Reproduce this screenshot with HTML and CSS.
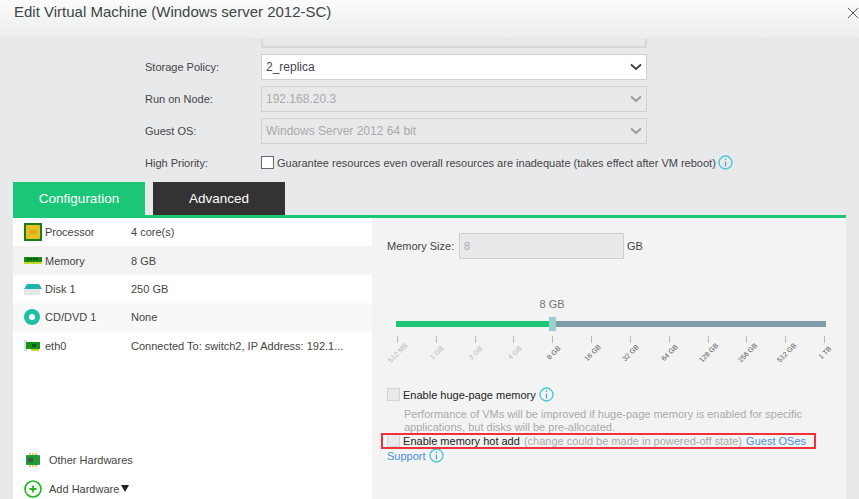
FILE: index.html
```html
<!DOCTYPE html>
<html lang="en">

<head>
  <meta charset="UTF-8">
  <meta name="viewport" content="width=device-width, initial-scale=1.0">
  <title>Edit Virtual Machine</title>
  <link rel="stylesheet" href="styles.css">
</head>

<body>
  <div class="header">
    <h1 class="title">Edit Virtual Machine (Windows server 2012-SC)</h1>
    <svg class="close" width="12" height="12" viewBox="0 0 12 12">
      <path d="M1 1l10 10M11 1L1 11" stroke="#555" stroke-width="1" fill="none" />
    </svg>
  </div>

  <div class="form">
    <div class="stub"></div>
    <div class="form-row">
      <label class="form-label">Storage Policy:</label>
      <div class="select">
        <span>2_replica</span>
        <svg class="chevron" width="12" height="8" viewBox="0 0 12 8">
          <path d="M1 1.5l5 4.5 5-4.5" stroke="#444" stroke-width="2" fill="none" />
        </svg>
      </div>
    </div>
    <div class="form-row">
      <label class="form-label">Run on Node:</label>
      <div class="select disabled">
        <span>192.168.20.3</span>
        <svg class="chevron" width="12" height="8" viewBox="0 0 12 8">
          <path d="M1 1.5l5 4.5 5-4.5" stroke="#999" stroke-width="2" fill="none" />
        </svg>
      </div>
    </div>
    <div class="form-row">
      <label class="form-label">Guest OS:</label>
      <div class="select disabled">
        <span>Windows Server 2012 64 bit</span>
        <svg class="chevron" width="12" height="8" viewBox="0 0 12 8">
          <path d="M1 1.5l5 4.5 5-4.5" stroke="#999" stroke-width="2" fill="none" />
        </svg>
      </div>
    </div>
    <div class="form-row priority-row">
      <label class="form-label">High Priority:</label>
      <span class="checkbox"></span>
      <span class="priority-text">Guarantee resources even overall resources are inadequate (takes effect after VM reboot)</span>
      <svg class="info" width="15" height="15" viewBox="0 0 15 15">
        <circle cx="7.5" cy="7.5" r="6.5" stroke="#4cc9d4" stroke-width="1.4" fill="none" />
        <path d="M7.5 3.5v1.5M7.5 6.5v5" stroke="#3fa9d8" stroke-width="1.2" />
      </svg>
    </div>
  </div>

  <div class="tabs">
    <div class="tab active">Configuration</div>
    <div class="tab">Advanced</div>
  </div>

  <div class="panels">
    <div class="left-panel">
      <ul class="hw-list">
        <li class="hw-item">
          <svg class="hw-icon" width="18" height="18" viewBox="0 0 18 18">
            <rect width="18" height="18" fill="#1c7a1c" />
            <rect x="2" y="2" width="14" height="14" rx="1" fill="#e8c024" />
            <rect x="5" y="7" width="8" height="4" fill="#d8ae1e" />
          </svg>
          <span class="hw-name">Processor</span>
          <span class="hw-value">4 core(s)</span>
        </li>
        <li class="hw-item shaded">
          <svg class="hw-icon" width="18" height="18" viewBox="0 0 18 18">
            <rect y="5" width="18" height="5" fill="#158a15" />
            <rect y="10" width="18" height="2" fill="#c7d92a" />
            <path d="M3 7h2M6 7h2M9 7h2M12 7h2" stroke="#0c4f0c" stroke-width="2" />
          </svg>
          <span class="hw-name">Memory</span>
          <span class="hw-value">8 GB</span>
        </li>
        <li class="hw-item">
          <svg class="hw-icon" width="18" height="18" viewBox="0 0 18 18">
            <path d="M3 4h12l3 5H0z" fill="#22b3ac" />
            <rect y="9" width="16" height="6" fill="#e6e8e8" />
          </svg>
          <span class="hw-name">Disk 1</span>
          <span class="hw-value">250 GB</span>
        </li>
        <li class="hw-item light">
          <svg class="hw-icon" width="18" height="18" viewBox="0 0 18 18">
            <circle cx="8" cy="9" r="5.5" stroke="#1cc0a5" stroke-width="5" fill="#fff" />
          </svg>
          <span class="hw-name">CD/DVD 1</span>
          <span class="hw-value">None</span>
        </li>
        <li class="hw-item">
          <svg class="hw-icon" width="18" height="18" viewBox="0 0 18 18">
            <rect y="3" width="3" height="11" fill="#ddd" />
            <rect x="2" y="5" width="14" height="7" fill="#13921a" />
            <rect x="7" y="12" width="8" height="2" fill="#c7d92a" />
            <rect x="8" y="7" width="4" height="3" fill="#0c5a10" />
          </svg>
          <span class="hw-name">eth0</span>
          <span class="hw-value">Connected To: switch2, IP Address: 192.1...</span>
        </li>
      </ul>
      <div class="hw-footer">
        <div class="footer-item">
          <svg class="footer-icon" width="18" height="16" viewBox="0 0 18 16">
            <path d="M6 1v14M9 1v14M12 1v14" stroke="#d8c020" stroke-width="1.4" />
            <rect x="2" y="3" width="14" height="10" rx="1" fill="#239a3a" />
            <rect x="4" y="6" width="5" height="4" fill="#3d5a45" />
          </svg>
          <span>Other Hardwares</span>
        </div>
        <div class="footer-item">
          <svg class="footer-icon" width="18" height="18" viewBox="0 0 18 18">
            <circle cx="9" cy="9" r="8" stroke="#1cb81c" stroke-width="1.6" fill="#fff" />
            <path d="M9 5.5v7M5.5 9h7" stroke="#1cb81c" stroke-width="1.8" />
          </svg>
          <span>Add Hardware</span><span class="caret"></span>
        </div>
      </div>
    </div>

    <div class="right-panel">
      <div class="memory-row">
        <span class="memory-label">Memory Size:</span>
        <div class="memory-input">8</div>
        <span class="memory-unit">GB</span>
      </div>

      <div class="slider">
        <div class="slider-value">8 GB</div>
        <div class="track">
          <div class="track-fill"></div>
          <div class="thumb"></div>
          <div class="track-rest"></div>
        </div>
        <div class="ticks" id="ticks"></div>
      </div>

      <div class="option">
        <span class="checkbox off"></span>
        <span class="option-text">Enable huge-page memory</span>
        <svg class="info" width="15" height="15" viewBox="0 0 15 15">
          <circle cx="7.5" cy="7.5" r="6.5" stroke="#4cc9d4" stroke-width="1.4" fill="none" />
          <path d="M7.5 3.5v1.5M7.5 6.5v5" stroke="#3fa9d8" stroke-width="1.2" />
        </svg>
      </div>
      <p class="option-desc">Performance of VMs will be improved if huge-page memory is enabled for specific applications, but disks will be pre-allocated.</p>
      <div class="hot-add">
        <span class="checkbox off"></span>
        <span class="option-text">Enable memory hot add</span>
        <span class="muted">(change could be made in powered-off state)</span>
        <a class="link guest">Guest OSes</a>
        <a class="link">Support</a>
        <svg class="info" width="15" height="15" viewBox="0 0 15 15">
          <circle cx="7.5" cy="7.5" r="6.5" stroke="#4cc9d4" stroke-width="1.4" fill="none" />
          <path d="M7.5 3.5v1.5M7.5 6.5v5" stroke="#3fa9d8" stroke-width="1.2" />
        </svg>
        <div class="highlight"></div>
      </div>
    </div>
  </div>

  <script>
    const tickLabels = [
      { text: "512 MB", dim: true },
      { text: "1 GB", dim: true },
      { text: "2 GB", dim: true },
      { text: "4 GB", dim: true },
      { text: "8 GB", dim: false },
      { text: "16 GB", dim: false },
      { text: "32 GB", dim: false },
      { text: "64 GB", dim: false },
      { text: "128 GB", dim: false },
      { text: "256 GB", dim: false },
      { text: "512 GB", dim: false },
      { text: "1 TB", dim: false }
    ];

    const ticks = document.getElementById("ticks");
    tickLabels.forEach(label => {
      const tick = document.createElement("div");
      tick.classList.add("tick");
      if (label.dim) {
        tick.classList.add("dim");
      }
      tick.innerHTML = `<span class="tick-mark"></span><span class="tick-label">${label.text}</span>`;
      ticks.appendChild(tick);
    });
  </script>
</body>

</html>
```

FILE: styles.css
```css
html,
body {
  height: 499px;
  overflow: hidden;
}

body {
  margin: 0;
  background-color: #e8e9eb;
  font-family: "Liberation Sans", Arial, sans-serif;
  font-size: 11px;
  color: #444;
}

.header {
  height: 38px;
  padding: 0 0 0 14px;
  display: flex;
  justify-content: space-between;
  background: linear-gradient(#fbfbfb, #eceded);
  border-bottom: 1px solid #e4e5e6;
}

.title {
  margin: 3px 0 0;
  font-size: 15px;
  line-height: 18px;
  font-weight: normal;
  color: #3c4646;
}

.close {
  margin-top: 7px;
}

.form {
  height: 143px;
  padding-left: 145px;
}

.stub {
  width: 386px;
  height: 9px;
  margin-left: 116px;
  box-sizing: border-box;
  border: 2px solid #d6d7d9;
  border-top: none;
}

.form-row {
  display: flex;
  align-items: center;
  margin-top: 6px;
}

.form-label {
  width: 116px;
  flex-shrink: 0;
}

.select {
  width: 386px;
  height: 26px;
  box-sizing: border-box;
  padding: 0 4px 0 4px;
  display: flex;
  align-items: center;
  justify-content: space-between;
  background-color: #fff;
  border: 1px solid #d0d1d3;
  font-size: 12px;
  color: #445;
}

.select.disabled {
  background-color: #e8e9eb;
  color: #aaa;
}

.priority-row {
  margin-top: 11px;
}

.checkbox {
  display: inline-block;
  width: 11px;
  height: 11px;
  flex-shrink: 0;
  background-color: #fff;
  border: 1px solid #667;
}

.checkbox.off {
  background-color: #e8e9eb;
  border-color: #d4d5d6;
}

.priority-text {
  margin-left: 3px;
}

.info {
  margin-left: 2px;
  flex-shrink: 0;
}

.tabs {
  display: flex;
  gap: 8px;
  margin-left: 13px;
}

.tab {
  width: 132px;
  height: 33px;
  line-height: 33px;
  text-align: center;
  font-size: 13.5px;
  color: #fff;
  background-color: #333;
}

.tab.active {
  background-color: #1cc677;
}

.panels {
  display: flex;
  width: 833px;
  height: 285px;
  margin-left: 13px;
  border-top: 3px solid #1cc677;
}

.left-panel {
  width: 359px;
  flex: none;
  display: flex;
  flex-direction: column;
  justify-content: space-between;
  background-color: #fff;
}

.hw-list {
  list-style-type: none;
  margin: 0;
  padding: 0;
}

.hw-item {
  height: 28.4px;
  display: flex;
  align-items: center;
  padding-left: 11px;
}

.hw-item.shaded {
  background-color: #f3f3f3;
}

.hw-item.light {
  background-color: #f8f8f8;
}

.hw-icon {
  margin-right: 3px;
  flex-shrink: 0;
}

.hw-name {
  width: 86px;
}

.hw-footer {
  padding-left: 11px;
}

.footer-item {
  height: 29px;
  display: flex;
  align-items: center;
}

.footer-icon {
  margin-right: 7px;
}

.caret {
  margin-left: 2px;
  border-left: 4px solid transparent;
  border-right: 4px solid transparent;
  border-top: 7px solid #222;
}

.right-panel {
  flex: 1;
  min-width: 0;
  box-sizing: border-box;
  padding: 15px 15px 0;
  background-color: #f3f3f3;
}

.memory-row {
  display: flex;
  align-items: center;
}

.memory-label {
  width: 72px;
}

.memory-input {
  width: 165px;
  height: 26px;
  box-sizing: border-box;
  padding-left: 4px;
  line-height: 24px;
  background-color: #e8e9eb;
  border: 1px solid #cfd0d2;
  color: #aaa;
}

.memory-unit {
  margin-left: 3px;
}

.slider {
  margin: 38px 5px 0 9px;
  height: 90px;
}

.slider-value {
  width: 312px;
  text-align: center;
  color: #777;
  line-height: 14px;
}

.track {
  display: flex;
  align-items: center;
  height: 14px;
  margin-top: 6px;
}

.track-fill {
  width: 153px;
  height: 6px;
  background-color: #1cc677;
}

.thumb {
  width: 7px;
  height: 14px;
  background-color: #97cfcf;
}

.track-rest {
  flex: 1;
  height: 6px;
  background-color: #7f9ba8;
}

.ticks {
  display: flex;
  justify-content: space-between;
  margin-top: 5px;
  padding: 0 1px;
}

.tick {
  width: 1px;
  display: flex;
  flex-direction: column;
  align-items: center;
}

.tick-mark {
  width: 1px;
  height: 7px;
  flex-shrink: 0;
  background-color: #bbb;
}

.tick-label {
  margin-top: 6px;
  font-size: 7px;
  line-height: 8px;
  white-space: nowrap;
  color: #555;
  transform: translateX(1px) rotate(-45deg);
}

.tick.dim .tick-label {
  color: #b5b5b5;
}

.option {
  display: flex;
  align-items: center;
}

.option .checkbox {
  margin-right: 3px;
}

.option .info {
  margin-left: 3px;
}

.option-text {
  color: #222;
}

.option-desc {
  margin: 6px 0 0 17px;
  line-height: 13px;
  color: #aaa;
}

.hot-add {
  position: relative;
  line-height: 14px;
}

.hot-add .checkbox {
  vertical-align: -2px;
}

.hot-add .info {
  margin-left: 0;
  vertical-align: -3px;
}

.muted {
  margin-left: 1px;
  color: #aaa;
}

.link {
  color: #4a90d9;
}

.link.guest {
  margin-left: 1px;
}

.highlight {
  position: absolute;
  top: -1px;
  left: -6px;
  width: 431px;
  height: 12px;
  border: 2px solid #f0303a;
}
```
